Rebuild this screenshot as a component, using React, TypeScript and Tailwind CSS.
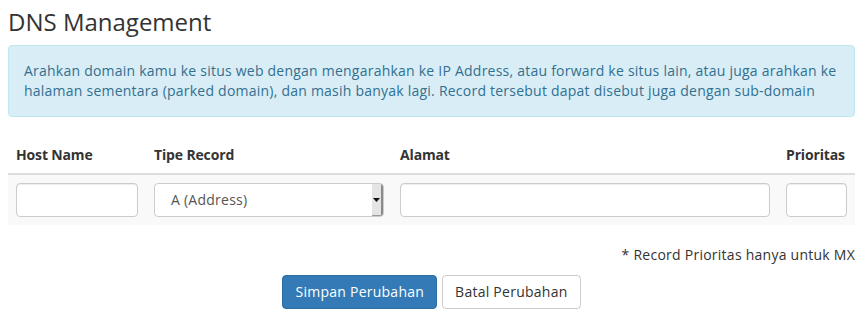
const font = { fontFamily: "'Open Sans', 'Noto Sans', sans-serif" };

const inputCls =
  "block h-[34px] w-full rounded-[4px] border border-[#ccc] bg-white px-3 text-[14px] text-[#555] shadow-[inset_0_1px_1px_rgba(0,0,0,0.075)]";

const columns = [
  { label: "Host Name", width: "w-[138px]" },
  { label: "Tipe Record", width: "w-[246px]" },
  { label: "Alamat", width: "w-[386px]" },
  { label: "Prioritas", width: "w-[77px]" },
];

function FakeSelect() {
  return (
    <div className="flex h-[34px] w-full overflow-hidden rounded-[4px] border border-[#ccc] bg-white text-[14px] tracking-[0.25px] text-[#555]">
      <span className="flex flex-1 items-center pl-4">A (Address)</span>
      <span className="flex w-[11px] items-center justify-center border-r-2 border-b border-r-[#8a8a8a] border-b-[#9a9a9a] bg-[#e4e4e4]">
        <svg width="7" height="4" viewBox="0 0 7 4">
          <path d="M0 0h7L3.5 4z" fill="#111" />
        </svg>
      </span>
    </div>
  );
}

export default function App() {
  return (
    <div className="bg-white pt-[9px] pr-[9px] pb-2 pl-2 text-[14px] leading-5 text-[#333]" style={font}>
      <h3 className="mb-[10px] text-[24px] leading-[1.1] font-normal">DNS Management</h3>

      <div className="mb-5 rounded-[4px] border border-[#bce8f1] bg-[#d9edf7] p-[15px] tracking-[0.23px] text-[#31708f]">
        Arahkan domain kamu ke situs web dengan mengarahkan ke IP Address, atau forward ke situs lain, atau juga arahkan ke
        halaman sementara (parked domain), dan masih banyak lagi. Record tersebut dapat disebut juga dengan sub-domain
      </div>

      <table className="mb-5 w-full border-collapse">
        <thead>
          <tr>
            {columns.map((c) => (
              <th
                key={c.label}
                className={`${c.width} border-b-2 border-[#ddd] p-2 text-left font-bold tracking-[-0.15px]`}
              >
                {c.label}
              </th>
            ))}
          </tr>
        </thead>
        <tbody>
          <tr className="bg-[#f9f9f9]">
            <td className="p-2">
              <input className={inputCls} />
            </td>
            <td className="p-2">
              <FakeSelect />
            </td>
            <td className="p-2">
              <input className={inputCls} />
            </td>
            <td className="p-2">
              <input className={inputCls} />
            </td>
          </tr>
        </tbody>
      </table>

      <p className="mb-[10px] text-right tracking-[0.25px]">* Record Prioritas hanya untuk MX</p>

      <div className="flex justify-center gap-[5px] tracking-[0.25px]">
        <button className="h-[34px] rounded-[4px] border border-[#2e6da4] bg-[#337ab7] px-3 text-white">
          Simpan Perubahan
        </button>
        <button className="h-[34px] rounded-[4px] border border-[#ccc] bg-white px-3 text-[#333]">
          Batal Perubahan
        </button>
      </div>
    </div>
  );
}
